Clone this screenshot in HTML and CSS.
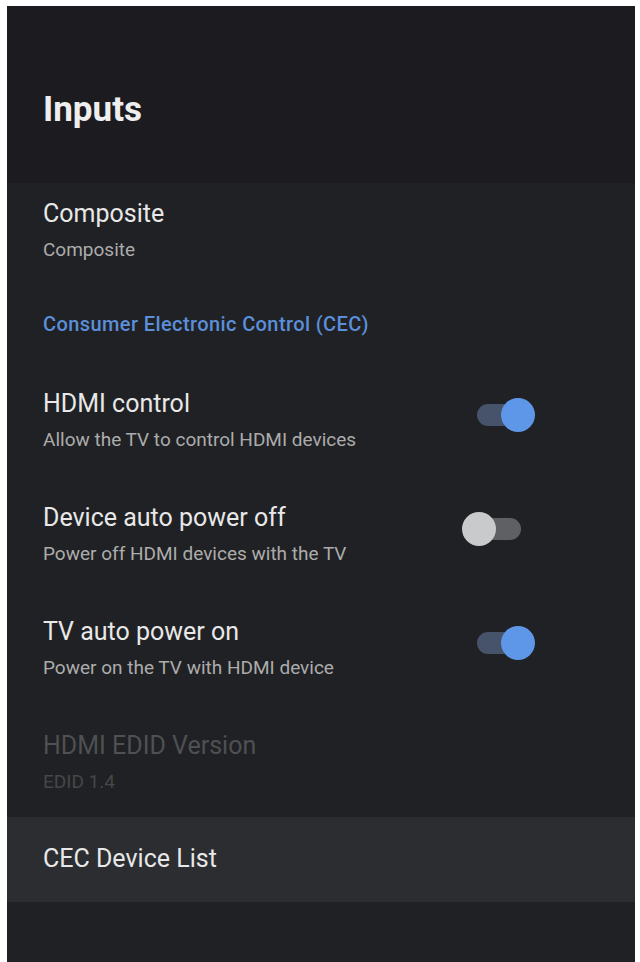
FILE: index.html
```html
<!DOCTYPE html>
<html>
<head>
<meta charset="utf-8">
<link rel="stylesheet" href="styles.css">
</head>
<body>
<div class="panel">
  <header class="header">
    <h1 class="page-title">Inputs</h1>
  </header>
  <div class="list">
    <div class="row">
      <div class="texts">
        <div class="title">Composite</div>
        <div class="sub">Composite</div>
      </div>
    </div>
    <div class="category">Consumer Electronic Control (CEC)</div>
    <div class="row">
      <div class="texts">
        <div class="title">HDMI control</div>
        <div class="sub">Allow the TV to control HDMI devices</div>
      </div>
      <div class="toggle on"><span class="track"></span><span class="thumb"></span></div>
    </div>
    <div class="row">
      <div class="texts">
        <div class="title">Device auto power off</div>
        <div class="sub">Power off HDMI devices with the TV</div>
      </div>
      <div class="toggle off"><span class="track"></span><span class="thumb"></span></div>
    </div>
    <div class="row">
      <div class="texts">
        <div class="title">TV auto power on</div>
        <div class="sub">Power on the TV with HDMI device</div>
      </div>
      <div class="toggle on"><span class="track"></span><span class="thumb"></span></div>
    </div>
    <div class="row disabled">
      <div class="texts">
        <div class="title">HDMI EDID Version</div>
        <div class="sub">EDID 1.4</div>
      </div>
    </div>
    <div class="focus-row">
      <div class="title">CEC Device List</div>
    </div>
  </div>
</div>
</body>
</html>
```
FILE: styles.css
```css
html, body {
  margin: 0;
  padding: 0;
  background: #ffffff;
}
body {
  font-family: Roboto, "Liberation Sans", Arial, sans-serif;
}
.panel {
  margin: 6px 5px 0 7px;
  height: 956px;
  background: #1f2023;
  display: flex;
  flex-direction: column;
  overflow: hidden;
}
.header {
  height: 177px;
  background: #1c1c20;
  padding: 84px 0 0 36px;
  box-sizing: border-box;
}
.page-title {
  margin: 0;
  font-size: 35px;
  line-height: 40px;
  font-weight: 700;
  color: #eeeeee;
}
.list {
  flex: 1;
  background: #202124;
  padding-top: 16px;
  display: flex;
  flex-direction: column;
}
.row {
  display: flex;
  align-items: flex-start;
  padding: 0 114px 0 36px;
  height: 63px;
}
.row + .row {
  margin-top: 51px;
}
.texts {
  flex: 1;
  display: flex;
  flex-direction: column;
  gap: 9px;
}
.title {
  font-size: 25px;
  line-height: 30px;
  color: #e8e8e8;
}
.sub {
  font-size: 19px;
  line-height: 24px;
  color: #acacac;
}
.disabled .title {
  color: #4e5053;
}
.disabled .sub {
  color: #45474a;
}
.category {
  margin: 50px 0 53px;
  padding-left: 36px;
  font-size: 20px;
  line-height: 24px;
  font-weight: 500;
  letter-spacing: 0.4px;
  color: #5b8fd9;
}
.toggle {
  position: relative;
  width: 44px;
  height: 34px;
  margin-top: 9px;
  flex: none;
}
.track {
  display: block;
  margin-top: 6px;
  height: 22px;
  border-radius: 11px;
}
.thumb {
  position: absolute;
  top: 0;
  width: 34px;
  height: 34px;
  border-radius: 50%;
}
.toggle.on .track {
  background: #47536b;
}
.toggle.on .thumb {
  left: 24px;
  background: #5f97e8;
}
.toggle.off .track {
  background: #5e6064;
}
.toggle.off .thumb {
  left: -15px;
  background: #c9cacc;
}
.focus-row {
  margin-top: 23px;
  height: 85px;
  box-sizing: border-box;
  padding: 27px 0 0 36px;
  background: #2b2d31;
}
```
